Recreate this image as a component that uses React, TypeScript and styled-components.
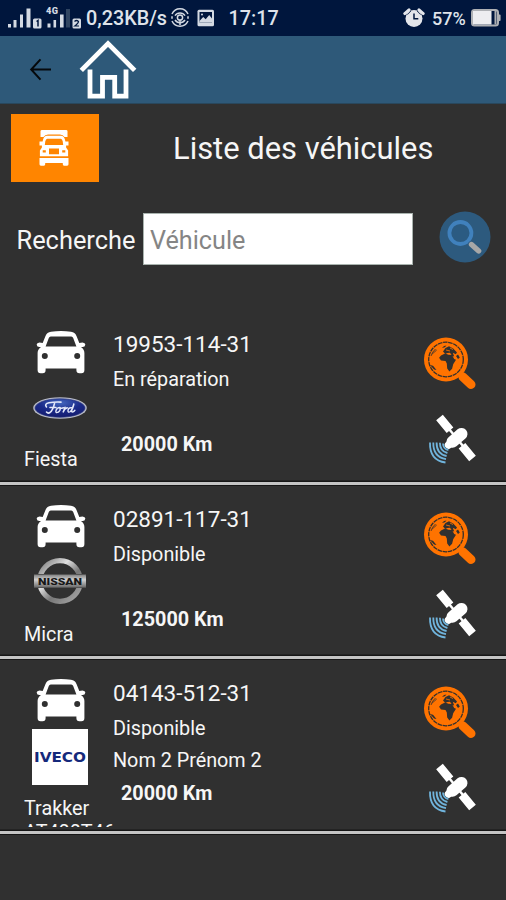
import React from "react";
import styled, { createGlobalStyle } from "styled-components";

const GlobalStyle = createGlobalStyle`
  * { box-sizing: border-box; }
  body { margin: 0; background: #303030; }
`;

const Screen = styled.main`
  width: 506px;
  height: 900px;
  overflow: hidden;
  display: flex;
  flex-direction: column;
  background: #303030;
  color: #f6f6f6;
  font-family: Roboto, "Liberation Sans", sans-serif;
`;

const StatusBar = styled.header`
  height: 36px;
  flex: none;
  display: flex;
  align-items: center;
  padding-left: 7px;
  background: #00163d;
`;

const StatusText = styled.span<{ $width: number; $size: number; $left: number }>`
  width: ${(p) => p.$width}px;
  padding: 2px 0 0 ${(p) => p.$left}px;
  flex: none;
  font-size: ${(p) => p.$size}px;
  font-weight: 500;
  line-height: 36px;
  white-space: nowrap;
  color: #dfe3ea;
`;

const Drawing = styled.svg<{ $left?: number; $top?: number }>`
  display: block;
  flex: none;
  margin-left: ${(p) => p.$left ?? 0}px;
  margin-top: ${(p) => p.$top ?? 0}px;
`;

const AppBar = styled.nav`
  height: 68px;
  flex: none;
  display: flex;
  align-items: flex-start;
  background: #2e5979;
  border-bottom: 1px solid #29475c;
`;

const PlainButton = styled.button<{ $left?: number; $top?: number }>`
  border: 0;
  padding: ${(p) => p.$top ?? 0}px 0 0 ${(p) => p.$left ?? 0}px;
  background: none;
  display: block;
  flex: none;
`;

const Heading = styled.section`
  height: 79px;
  flex: none;
  display: flex;
  padding: 10px 0 0 11px;
`;

const TruckTile = styled.div`
  width: 88px;
  height: 68px;
  padding-right: 3px;
  background: #ff8500;
  display: flex;
  align-items: center;
  justify-content: center;
`;

const Title = styled.h1`
  margin: 0 0 0 74px;
  font-size: 30.9px;
  font-weight: 400;
  line-height: 69px;
  white-space: nowrap;
`;

const SearchForm = styled.section`
  height: 127.9px;
  flex: none;
  display: flex;
  align-items: flex-start;
  padding: 28px 0 0 16.5px;
`;

const SearchLabel = styled.label`
  width: 126.5px;
  font-size: 25.4px;
  line-height: 59px;
  white-space: nowrap;
`;

const SearchInput = styled.input`
  width: 270px;
  height: 52px;
  margin: 2px 26px 0 0;
  padding: 3px 6px 0;
  border: 1px solid #a9b3ae;
  border-radius: 0;
  background: #fff;
  color: #333;
  font-family: inherit;
  font-size: 25.2px;
  &::placeholder { color: #858585; opacity: 1; }
`;

const VehicleRow = styled.article`
  height: 174.3px;
  flex: none;
  display: grid;
  grid-template-columns: 113px 309px 1fr;
  border-bottom: 3px solid #c4c4c4;
  box-shadow: 0 1px 0 #161616, inset 0 -1.5px 0 #161616;
`;

const Identity = styled.div`
  height: 167.5px;
  overflow: hidden;
  padding: 20px 0 0 24px;
`;

const LogoBox = styled.div`
  width: 56px;
  height: 56px;
  margin: 6.5px 0 12px 8px;
  display: flex;
  align-items: center;
  justify-content: center;
`;

const Model = styled.div`
  font-size: 19.8px;
  line-height: 24px;
  height: 56px;
  white-space: pre;
`;

const Details = styled.div`
  display: grid;
  grid-template-rows: 40px 32px 31px 35px;
  align-content: start;
  padding-top: 13.5px;
  white-space: nowrap;
`;

const Plate = styled.div`
  font-size: 22.5px;
  line-height: 40px;
`;

const Info = styled.div`
  font-size: 19.8px;
  line-height: 31px;
`;

const Mileage = styled.div`
  font-size: 19.8px;
  font-weight: 700;
  line-height: 35px;
  padding-left: 8px;
`;

const Actions = styled.div`
  display: flex;
  flex-direction: column;
  align-items: flex-start;
  padding-top: 25.5px;
  gap: 22px;
`;

const SignalIcon = () => (
  <Drawing width="76" height="30" viewBox="7 4 76 30" $top={2} fill="#d4dae3">
    <rect x="8" y="24" width="3" height="3.5" />
    <rect x="13.5" y="20" width="3" height="7.5" />
    <rect x="20" y="14.5" width="3" height="13" />
    <rect x="26.5" y="8.5" width="4" height="19" />
    <rect x="33" y="18.5" width="8.5" height="10" rx="1.5" />
    <path d="M36.5 21.5 38 20.5v6" fill="none" stroke="#00163d" strokeWidth="1.5" />
    <text x="46" y="14.2" fontSize="9.2" fontWeight="900" letterSpacing="0.4" fontFamily="Roboto, sans-serif">4G</text>
    <rect x="47.5" y="23.5" width="3" height="4" />
    <rect x="53.5" y="20" width="2.6" height="7.5" />
    <rect x="60" y="14.5" width="3.6" height="13" />
    <rect x="66" y="9" width="4" height="18.5" fill="#304562" />
    <rect x="72.5" y="18.5" width="8.5" height="10" rx="1.5" />
    <path d="M74.5 21.5q2-2 4 0 0 1.5-3.7 4.5h4.2" fill="none" stroke="#00163d" strokeWidth="1.2" />
  </Drawing>
);

const HotspotIcon = () => (
  <Drawing width="18" height="20" viewBox="0 0 18 20" fill="none" stroke="#d4dae3" strokeWidth="1.5">
    <path d="M1 6a8.8 8.8 0 0 1 16 0M4 7.7a6 6 0 0 1 10 0M1 13a8.8 8.8 0 0 0 16 0M4 12a6 6 0 0 0 10 0" />
    <path d="M1 8.2v2.6M17 8.2v2.6" />
    <circle cx="9" cy="9.5" r="2.6" />
    <path d="M9 12v5" />
  </Drawing>
);

const PictureIcon = () => (
  <Drawing width="18" height="18" viewBox="0 0 18 18" $left={8}>
    <rect x="0.5" y="0.7" width="16.5" height="16.5" rx="1.5" fill="#d4dae3" />
    <rect x="2.5" y="3" width="12.5" height="10.5" fill="#00163d" />
    <path d="m2.5 12 3.7-4 2.5 2.2 3.5-4.1 2.8 3.3v4.1H2.5z" fill="#d4dae3" />
    <circle cx="5" cy="5.4" r="1" fill="#d4dae3" />
  </Drawing>
);

const AlarmIcon = () => (
  <Drawing width="22" height="20" viewBox="0 0 22 20">
    <circle cx="11" cy="10.5" r="8.5" fill="#e4e6eb" />
    <path d="M1.8 5.6 6 1.8M16 1.8l4.2 3.8" stroke="#e4e6eb" strokeWidth="3" strokeLinecap="round" />
    <path d="M4.4 6.7 8 3M14 3l3.6 3.7" stroke="#00163d" strokeWidth="0.8" />
    <path d="M11 5.5v5.2h4.3" stroke="#00163d" strokeWidth="1.5" fill="none" />
  </Drawing>
);

const BatteryIcon = () => (
  <Drawing width="30" height="18" viewBox="0 0 30 18">
    <rect x="1" y="1" width="26" height="15.5" rx="2.5" fill="#00163d" stroke="#aeb0b4" strokeWidth="2" />
    <rect x="2" y="2" width="18.500" height="13.500" fill="#ededf0" />
    <path d="M24.500 2v13.500" stroke="#aeb0b4" strokeWidth="2" />
    <rect x="27" y="5.5" width="2.6" height="6.5" rx="1" fill="#aeb0b4" />
  </Drawing>
);

const BackIcon = () => (
  <Drawing width="24" height="24" viewBox="0 0 24 24" fill="none" stroke="#05090c" strokeWidth="2">
    <path d="M23 11.500H3M12.500 1.300 3.200 11.500l9.300 10.200" />
  </Drawing>
);

const HomeIcon = () => (
  <Drawing width="58" height="60" viewBox="0 0 58 60" fill="none" stroke="#fff" strokeWidth="4.8">
    <path d="M2.3 30.4 29 3.6l26.7 26.8" />
    <path d="M11 29.5v26.600h12.500V37.300h12.200v18.800h11.300V29.500" />
  </Drawing>
);

const TruckIcon = () => (
  <Drawing width="32" height="38" viewBox="0 0 32 38" fill="#fff">
    <path d="M2.5 2.3Q2.5 1 4 1h24q1.5 0 1.5 1.3V8h-3Q25 5.5 22 5.5H10Q7 5.5 5.5 8h-3z" />
    <path fillRule="evenodd" d="M9 6.8h14q3 0 4 4l.4 1.8h3.1v4h-2.4v2l2 3v5.7H1.9v-5.7l2-3v-2H1.5v-4h3.1L5 10.8q1-4 4-4zm.3 3q-1.5 0-2 2.5l-.5 3.6h18.4l-.5-3.6q-.5-2.5-2-2.5zM11 19.5v5.7h10v-5.7zM4.7 21.2v2.3h3.1v-2.3zm19.5 0v2.3h3.1v-2.3z" />
    <path d="M1.5 29h29v6.3q0 1.4-1.4 1.4H26q-1.2 0-1.2-1.4V34H7.2v1.3q0 1.4-1.2 1.4H2.9q-1.4 0-1.4-1.4z" />
  </Drawing>
);

const SearchIcon = () => (
  <Drawing width="52" height="52" viewBox="0 0 52 52">
    <circle cx="26" cy="26" r="25.5" fill="#2d5a7e" />
    <circle cx="21.4" cy="22" r="11" fill="#2b5b82" stroke="#4081bd" strokeWidth="3.8" />
    <path d="m30 31 3 3" stroke="#37638a" strokeWidth="3" />
    <path d="m32.5 33.5 7.2 6.4" stroke="#a7a7a7" strokeWidth="5.3" strokeLinecap="round" />
  </Drawing>
);

const CarIcon = () => (
  <Drawing width="50" height="43" viewBox="0 0 50 43" fill="#fff" $left={11.5}>
    <path fillRule="evenodd" d="M15 .7Q25-.5 35 .7q4 .3 5.5 4.3L43.3 12l3.2-.6q3 .3 2.8 2.3-.2 2.2-2.8 2.2H45q3.4 2.4 3.4 6v17q0 3.3-3 3.3h-2q-3 0-3-3.3v-1.4H9.6v1.4q0 3.3-3 3.3h-2q-3 0-3-3.3v-17q0-3.6 3.4-6H3.5Q.9 15.9.7 13.7q-.2-2 2.8-2.3l3.2.6L9.5 5Q11 1 15 .7zm-.3 4.8q-1.3 0-1.9 1.6l-3.2 8.3h30.8l-3.2-8.3q-.6-1.6-1.9-1.6zM8.8 22a3 3 0 1 0 0 6 3 3 0 1 0 0-6zm32.4 0a3 3 0 1 0 0 6 3 3 0 1 0 0-6z" />
  </Drawing>
);

const FordLogo = () => (
  <Drawing width="56" height="24" viewBox="0 0 56 24" $top={-1}>
    <defs>
      <radialGradient id="fordBlue" cx="50%" cy="22%" r="75%">
        <stop offset="0" stopColor="#4569c0" />
        <stop offset="0.55" stopColor="#1b2b8a" />
        <stop offset="1" stopColor="#141c70" />
      </radialGradient>
    </defs>
    <ellipse cx="28" cy="12" rx="26.8" ry="10.8" fill="#b9bcc8" />
    <ellipse cx="28" cy="12" rx="25" ry="9.2" fill="url(#fordBlue)" stroke="#26347f" strokeWidth="0.7" />
    <g fill="none" stroke="#e4e9fa" strokeLinecap="round">
      <path d="M14.5 11Q12 8 17 6.8q5-1 12-.7M22.5 7.5Q21 14 18 16.5q-2 1.3-3.5-.5M18 11.5h6" strokeWidth="1.6" />
      <path d="M28 11.5q-3.2 0-4 3t2.3 1.7q2.6-2 1.7-4.7 1.6 1.5 3.5.2M33 11.2q-1 3-2 5.2 1.5-4 4.3-4.7M39.500 11.800q-3-.5-3.500 2.500-.3 3 2.500 1.200Q41 13 42 7.500q-1.500 4-2.500 8 1.300 1.300 3.400-1.300" strokeWidth="1.4" />
    </g>
  </Drawing>
);

const NissanLogo = () => (
  <Drawing width="54" height="48" viewBox="0 0 54 48" $top={-3}>
    <defs>
      <linearGradient id="nissanRing" x1="0" y1="0" x2="1" y2="1">
        <stop offset="0" stopColor="#777" />
        <stop offset="0.35" stopColor="#e0e0e0" />
        <stop offset="0.6" stopColor="#777" />
        <stop offset="1" stopColor="#aaa" />
      </linearGradient>
      <linearGradient id="nissanBar" x1="0" y1="0" x2="0" y2="1">
        <stop offset="0" stopColor="#888" />
        <stop offset="0.4" stopColor="#d1d1d1" />
        <stop offset="1" stopColor="#707070" />
      </linearGradient>
    </defs>
    <circle cx="27" cy="24" r="20.3" fill="none" stroke="url(#nissanRing)" strokeWidth="5.2" />
    <rect x="1" y="17" width="52" height="14" fill="#555" />
    <rect x="1" y="18" width="52" height="12" rx="0.8" fill="url(#nissanBar)" />
    <text x="5" y="27.5" fontSize="9.3" fontWeight="900" textLength="44" lengthAdjust="spacingAndGlyphs" fontFamily="Roboto, sans-serif" fill="#181818">NISSAN</text>
  </Drawing>
);

const IvecoLogo = () => (
  <Drawing width="56" height="56" viewBox="0 0 56 56">
    <rect width="56" height="56" fill="#fff" />
    <text x="2" y="33.3" fontSize="14.5" fontWeight="700" textLength="52" fontFamily="DejaVu Sans, sans-serif" lengthAdjust="spacingAndGlyphs" fill="#15297b">IVECO</text>
  </Drawing>
);

const GlobeSearchIcon = () => (
  <Drawing width="54" height="54" viewBox="0 0 54 54">
    <path d="m36 36 5 5" stroke="#ff7300" strokeWidth="4" />
    <path d="m41 41 8 7.5" stroke="#ff7300" strokeWidth="9" strokeLinecap="round" />
    <circle cx="24" cy="23.5" r="22" fill="#ff7300" />
    <circle cx="24" cy="23.5" r="17.3" fill="none" stroke="#33302d" strokeWidth="1.3" strokeDasharray="4.5 0.7" />
    <g fill="#303030">
      <path d="m19 19.5 4-2 3.5 1.2 3.5.2 2.200 4.200 1.800.6-2.800 4.500-1.100 4.500-2.700 2.800-2.200-3-.4-5-1.300-2.500-4.500-.6-1.900-2.600z" />
      <path d="m21 15.5 2.500-3.500 3.500-1.700 4.200 2.200 3.800 4-1.200 1.800-3-1.500 1.400 3.600-2-.5-2.200-3.200-2.600.2-2 1z" />
      <path d="m20 12 2-2 2.500-.6-1.600 1.800zm14 8 2-1.500 1.800 3-1.800 1.500zm-26 9 3 .8 3.500 4.200-2.500-.6z" />
    </g>
    <path d="m24 14 4 1m0-3 3 1.500" stroke="#ff7300" strokeWidth="0.8" />
    <path d="M9 20q1-4 4.500-7m1.200 1-4.500 4" stroke="#303030" strokeWidth="0.8" fill="none" />
  </Drawing>
);

const SatelliteIcon = () => (
  <Drawing width="52" height="54" viewBox="0 0 52 54" $left={5}>
    <g fill="none" stroke="#fff" strokeLinejoin="round">
      <path d="m13 6 32 39" strokeWidth="2.5" />
      <path d="m12.5 5.5 10.5 12.8M35 33.7l10.500 12.800" strokeWidth="8.6" />
      <path d="m25.500 29.700 9-7.800" strokeWidth="12" strokeLinecap="round" />
      <path d="m21.500 33 3-2.800" strokeWidth="7.500" strokeLinecap="round" />
    </g>
    <g fill="none" stroke="#70b4dc" strokeWidth="1.8">
      <path d="M3 30.500q-.5 18 15.500 20M6.300 30.500q-.3 14.500 12.700 16.700M9.600 30.500q-.2 11.500 10 13.500M12.900 30.800q0 8.500 7.500 10.200M16 31.500q.2 5.500 5.400 6.500" />
    </g>
  </Drawing>
);

const vehicles = [
  { plate: "19953-114-31", state: "En réparation", driver: "", distance: "20000 Km", model: "Fiesta", Logo: FordLogo },
  { plate: "02891-117-31", state: "Disponible", driver: "", distance: "125000 Km", model: "Micra", Logo: NissanLogo },
  { plate: "04143-512-31", state: "Disponible", driver: "Nom 2 Prénom 2", distance: "20000 Km", model: "Trakker\nAT400T46", Logo: IvecoLogo },
];

export default function App() {
  return (
    <Screen>
      <GlobalStyle />
      <StatusBar>
        <SignalIcon />
        <StatusText $width={88} $size={19.8} $left={3}>0,23KB/s</StatusText>
        <HotspotIcon />
        <PictureIcon />
        <StatusText $width={188} $size={19.8} $left={13.5}>17:17</StatusText>
        <AlarmIcon />
        <StatusText $width={46} $size={18} $left={7}>57%</StatusText>
        <BatteryIcon />
      </StatusBar>
      <AppBar>
        <PlainButton aria-label="Retour" $left={28} $top={22}><BackIcon /></PlainButton>
        <PlainButton aria-label="Accueil" $left={27} $top={4}><HomeIcon /></PlainButton>
      </AppBar>
      <Heading>
        <TruckTile><TruckIcon /></TruckTile>
        <Title>Liste des véhicules</Title>
      </Heading>
      <SearchForm>
        <SearchLabel htmlFor="vehicle">Recherche</SearchLabel>
        <SearchInput id="vehicle" placeholder="Véhicule" />
        <PlainButton aria-label="Rechercher"><SearchIcon /></PlainButton>
      </SearchForm>
      {vehicles.map(({ plate, state, driver, distance, model, Logo }) => (
        <VehicleRow key={plate}>
          <Identity>
            <CarIcon />
            <LogoBox><Logo /></LogoBox>
            <Model>{model}</Model>
          </Identity>
          <Details>
            <Plate>{plate}</Plate>
            <Info>{state}</Info>
            <Info>{driver}</Info>
            <Mileage>{distance}</Mileage>
          </Details>
          <Actions>
            <GlobeSearchIcon />
            <SatelliteIcon />
          </Actions>
        </VehicleRow>
      ))}
    </Screen>
  );
}
